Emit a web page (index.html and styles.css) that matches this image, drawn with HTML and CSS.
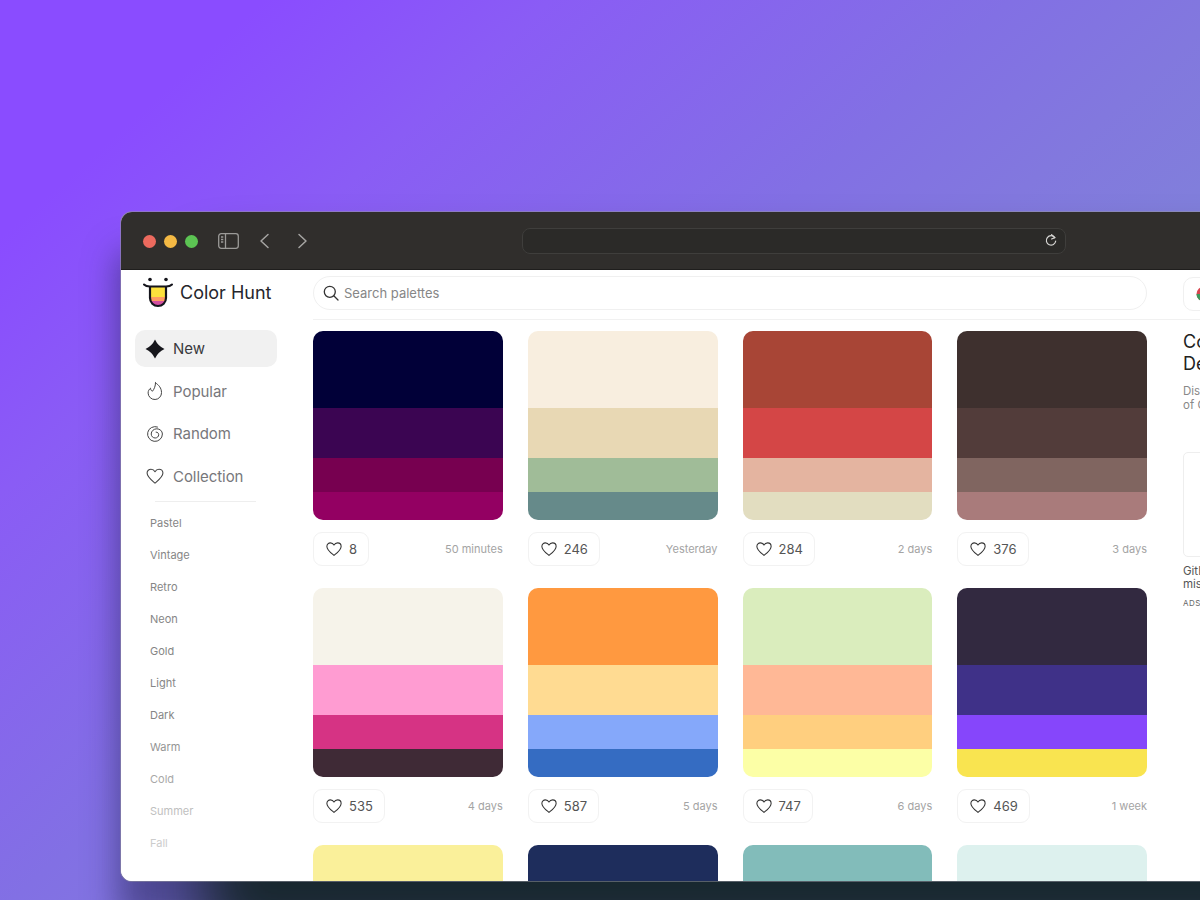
FILE: index.html
```html
<!DOCTYPE html>
<html lang="en">
<head>
<meta charset="utf-8">
<title>Color Hunt</title>
<link rel="stylesheet" href="styles.css">
</head>
<body>
<div class="stage">
  <div class="window">
    <div class="titlebar">
      <div class="lights"><span class="light red"></span><span class="light yellow"></span><span class="light green"></span></div>
      <svg class="tb-icon side" width="21" height="16" viewBox="0 0 21 16" fill="none" stroke="#9b9a98" stroke-width="1.3"><rect x=".7" y=".7" width="19.6" height="14.6" rx="2.5"/><path d="M7.5 .7v14.6M3 4h2.3M3 6.5h2.3M3 9h2.3"/></svg>
      <svg class="tb-icon back" width="11" height="16" viewBox="0 0 11 16" fill="none" stroke="#a5a4a2" stroke-width="1.5" stroke-linecap="round" stroke-linejoin="round"><path d="M9 1.5 2 8l7 6.5"/></svg>
      <svg class="tb-icon fwd" width="11" height="16" viewBox="0 0 11 16" fill="none" stroke="#a5a4a2" stroke-width="1.5" stroke-linecap="round" stroke-linejoin="round"><path d="M2 1.5 9 8l-7 6.500"/></svg>
      <div class="address">
        <svg width="12" height="13" viewBox="0 0 12 13" fill="none" stroke="#d8d7d5" stroke-width="1.2" stroke-linecap="round" stroke-linejoin="round"><path d="M9.8 3.6A4.7 4.7 0 1 0 10.7 7"/><path d="M6.6 .6 9.9 3.6 6.6 5"/></svg>
      </div>
    </div>
    <div class="page">
      <aside class="sidebar">
        <div class="brand">
          <svg class="logo" width="30" height="32" viewBox="0 0 30 32">
            <defs><clipPath id="tongue"><path d="M7 9h16v12a8 8 0 0 1-16 0z"/></clipPath></defs>
            <g clip-path="url(#tongue)"><rect x="6" y="8" width="18" height="13" fill="#fde13c"/><rect x="6" y="20" width="18" height="4" fill="#ff9b63"/><rect x="6" y="24" width="18" height="6" fill="#d24fa0"/></g>
            <path d="M7 9v12a8 8 0 0 0 16 0V9" fill="none" stroke="#15151c" stroke-width="2.2"/>
            <path d="M1 7.5c1.5 1.6 3.5 2 6 2h16c2.500 0 4.500-.4 6-2" fill="none" stroke="#15151c" stroke-width="2" stroke-linecap="round"/>
            <circle cx="7" cy="2.500" r="1.800" fill="#15151c"/><circle cx="23" cy="2.500" r="1.800" fill="#15151c"/>
          </svg>
          <span class="brand-name">Color Hunt</span>
        </div>
        <nav class="nav">
          <a class="nav-item active">
            <svg width="20" height="20" viewBox="0 0 20 20"><path fill="#17171c" d="M10 .5Q13 7 19.500 10 13 13 10 19.500 7 13 .5 10 7 7 10 .5Z"/></svg>
            New</a>
          <a class="nav-item">
            <svg width="20" height="20" viewBox="0 0 20 20" fill="none" stroke="#444" stroke-width="1" stroke-linejoin="round" stroke-linecap="round"><path d="M10.500 1.800c3.200 2.200 6 5.200 6 9.700a6.700 6.700 0 0 1-13.400.6c0-2.200 1-3.800 2.400-4.900.1 1.500.8 2.600 2 3 1.800-2.300 3-5.200 3-8.400z"/></svg>
            Popular</a>
          <a class="nav-item">
            <svg width="20" height="20" viewBox="0 0 20 20" fill="none" stroke="#444" stroke-width="1" stroke-linecap="round"><path d="M12.500 3A7.400 7.400 0 1 0 17.400 10c0-3-2.600-5.200-5.600-5.200-3 0-5.600 2.300-5.600 5.200 0 2.300 1.800 4 4 4 2 0 3.500-1.500 3.500-3.300 0-1.500-1.100-2.600-2.600-2.600"/></svg>
            Random</a>
          <a class="nav-item">
            <svg width="20" height="20" viewBox="0 0 24 24" fill="none" stroke="#444" stroke-width="1.300" stroke-linejoin="round"><use href="#heart"/></svg>
            Collection</a>
        </nav>
        <div class="divider"></div>
        <ul class="tags">
          <li>Pastel</li><li>Vintage</li><li>Retro</li><li>Neon</li><li>Gold</li><li>Light</li><li>Dark</li><li class="fade1">Warm</li><li class="fade2">Cold</li><li class="fade3">Summer</li><li class="fade4">Fall</li>
        </ul>
      </aside>
      <main class="main">
        <header class="topbar">
          <div class="search">
            <svg width="16" height="16" viewBox="0 0 16 16" fill="none" stroke="#333" stroke-width="1.300" stroke-linecap="round"><circle cx="6.800" cy="6.800" r="5.500"/><path d="m11 11 4 4"/></svg>
            <span>Search palettes</span>
          </div>
          <div class="lang"><svg width="16" height="16" viewBox="0 0 16 16"><circle cx="8" cy="8" r="7.500" fill="#d8464f"/><path d="M.5 8a7.500 7.500 0 0 0 15 0z" fill="#3a9a5c"/></svg></div>
        </header>
        <div class="content">
          <section class="grid">
            <article class="card">
              <div class="palette"><i style="background:#010038"></i><i style="background:#3b0552"></i><i style="background:#770050"></i><i style="background:#930062"></i></div>
              <div class="meta"><button class="like"><svg width="18" height="18"><use href="#heart18"/></svg>8</button><time>50 minutes</time></div>
            </article>
            <article class="card">
              <div class="palette"><i style="background:#f8eedf"></i><i style="background:#e8d8b4"></i><i style="background:#a0bc98"></i><i style="background:#668a8a"></i></div>
              <div class="meta"><button class="like"><svg width="18" height="18"><use href="#heart18"/></svg>246</button><time>Yesterday</time></div>
            </article>
            <article class="card">
              <div class="palette"><i style="background:#a84536"></i><i style="background:#d44646"></i><i style="background:#e4b4a0"></i><i style="background:#e2ddc0"></i></div>
              <div class="meta"><button class="like"><svg width="18" height="18"><use href="#heart18"/></svg>284</button><time>2 days</time></div>
            </article>
            <article class="card">
              <div class="palette"><i style="background:#3e302e"></i><i style="background:#523c3a"></i><i style="background:#806560"></i><i style="background:#a97b7b"></i></div>
              <div class="meta"><button class="like"><svg width="18" height="18"><use href="#heart18"/></svg>376</button><time>3 days</time></div>
            </article>
            <article class="card">
              <div class="palette"><i style="background:#f6f3ea"></i><i style="background:#ff9cd2"></i><i style="background:#d63384"></i><i style="background:#3f2a36"></i></div>
              <div class="meta"><button class="like"><svg width="18" height="18"><use href="#heart18"/></svg>535</button><time>4 days</time></div>
            </article>
            <article class="card">
              <div class="palette"><i style="background:#ff9940"></i><i style="background:#ffdb92"></i><i style="background:#85a8fa"></i><i style="background:#356cc2"></i></div>
              <div class="meta"><button class="like"><svg width="18" height="18"><use href="#heart18"/></svg>587</button><time>5 days</time></div>
            </article>
            <article class="card">
              <div class="palette"><i style="background:#daedbd"></i><i style="background:#ffb896"></i><i style="background:#ffcf7f"></i><i style="background:#fcffa6"></i></div>
              <div class="meta"><button class="like"><svg width="18" height="18"><use href="#heart18"/></svg>747</button><time>6 days</time></div>
            </article>
            <article class="card">
              <div class="palette"><i style="background:#322940"></i><i style="background:#3f3188"></i><i style="background:#8646fb"></i><i style="background:#f9e450"></i></div>
              <div class="meta"><button class="like"><svg width="18" height="18"><use href="#heart18"/></svg>469</button><time>1 week</time></div>
            </article>
            <article class="card">
              <div class="palette"><i style="background:#faf09a"></i></div>
            </article>
            <article class="card">
              <div class="palette"><i style="background:#1e2d5c"></i></div>
            </article>
            <article class="card">
              <div class="palette"><i style="background:#82bcba"></i></div>
            </article>
            <article class="card">
              <div class="palette"><i style="background:#ddf1ee"></i></div>
            </article>
          </section>
          <aside class="promo">
            <h2>Color Palettes for Designers and Artists</h2>
            <p>Discover the newest hand-picked palettes of Color Hunt</p>
            <div class="ad-box"></div>
            <p class="ad-text">GitHub Actions: the missing manual</p>
            <p class="ad-label">ADS VIA CARBON</p>
          </aside>
        </div>
      </main>
    </div>
  </div>
</div>
<svg class="defs" width="0" height="0">
  <defs>
    <path id="heart" d="M12 20.500C8 17.200 2.500 13.200 2.500 8.500 2.500 5.700 4.700 3.800 7.200 3.800c2 0 3.700 1 4.800 3 1.100-2 2.800-3 4.800-3 2.500 0 4.700 1.900 4.700 4.700 0 4.700-5.500 8.700-9.500 12z"/>
    <symbol id="heart18" viewBox="0 0 24 24"><use href="#heart" fill="none" stroke="#333" stroke-width="1.400" stroke-linejoin="round"/></symbol>
  </defs>
</svg>
</body>
</html>
```
FILE: styles.css
```css
* { box-sizing: border-box; }
html, body { margin: 0; padding: 0; }
body { font-family: Inter, "Liberation Sans", sans-serif; }
.defs { position: absolute; }

.stage {
  width: 1200px;
  height: 900px;
  overflow: hidden;
  padding: 212px 0 0 121px;
  background: linear-gradient(138deg, #8a4cff 12%, #8a5cf5 25%, #8270e4 46%, #8278de 56%, #7f8ad6 80%);
}
.window {
  width: 1200px;
  height: 669px;
  border-radius: 11px 0 0 11px;
  overflow: hidden;
  box-shadow:
    0 0 0 1px rgba(150,150,160,.5),
    90px 60px 60px 6px rgba(22,38,42,.95),
    -4px 40px 32px rgba(40,40,90,.55);
  display: flex;
  flex-direction: column;
  background: #fff;
}

/* Browser chrome */
.titlebar {
  height: 58px;
  flex: none;
  background: #302e2c;
  border-bottom: 1px solid #1f1e1d;
  display: flex;
  align-items: center;
  padding: 0 0 0 22px;
}
.lights { display: flex; gap: 8px; margin-top: 2px; }
.light { width: 13px; height: 13px; border-radius: 50%; }
.red { background: #ec6a5e; }
.yellow { background: #f4b944; }
.green { background: #5cc453; }
.side { margin-left: 20px; }
.back { margin-left: 20px; }
.fwd { margin-left: 27px; }
.address {
  width: 544px;
  height: 26px;
  margin-left: 214px;
  background: #2b2a28;
  border: 1.500px solid #3f3e3c;
  border-radius: 8px;
  display: flex;
  align-items: center;
  justify-content: flex-end;
  padding-right: 8px;
}

/* Page */
.page { flex: 1; display: flex; min-height: 0; background: #fff; }
.sidebar { width: 192px; flex: none; padding-left: 14px; }
.brand { height: 60px; display: flex; align-items: flex-start; padding: 7px 0 0 8px; gap: 7px; }
.brand-name { font-size: 18px; font-weight: 400; color: #26262c; line-height: 30px; margin-top: 1px; }
.nav { display: flex; flex-direction: column; gap: 5.500px; width: 142px; }
.nav-item {
  height: 37px;
  border-radius: 10px;
  padding-left: 10px;
  display: flex;
  align-items: center;
  gap: 8px;
  font-size: 15px;
  letter-spacing: -.05px;
  color: #77777b;
}
.nav-item.active { background: #f1f1f1; color: #3a3a3e; }
.divider { width: 101px; height: 1px; margin: 6px 0 0 20px; background: #eeeeee; }
.tags { list-style: none; margin: 5px 0 0; padding: 0 0 0 15px; }
.tags li { height: 32px; line-height: 32px; font-size: 11px; color: #868686; }
.tags .fade1 { color: #949494; }
.tags .fade2 { color: #a8a8a8; }
.tags .fade3 { color: #c0c0c0; }
.tags .fade4 { color: #cccccc; }

.main { flex: 1; min-width: 0; }
.topbar {
  height: 50px;
  padding-top: 6px;
  border-bottom: 1px solid #f1f1f1;
  display: flex;
  align-items: flex-start;
  gap: 36px;
}
.search {
  width: 834px;
  height: 34px;
  border: 1px solid #f0f0f0;
  border-radius: 17px;
  display: flex;
  align-items: center;
  gap: 5px;
  padding-left: 9px;
  font-size: 13px;
  color: #868686;
}
.lang {
  width: 60px;
  height: 34px;
  margin-top: 1px;
  border: 1px solid #f0f0f0;
  border-radius: 10px;
  display: flex;
  align-items: center;
  padding-left: 12px;
}

.content { display: flex; gap: 36px; padding-top: 11px; align-items: flex-start; }
.grid {
  width: 834px;
  flex: none;
  display: grid;
  grid-template-columns: repeat(4, 189.75px);
  column-gap: 25px;
  row-gap: 22px;
}
.palette {
  height: 189px;
  border-radius: 10px;
  overflow: hidden;
  display: grid;
  grid-template-rows: 77px 50px 34px 28px;
}
.palette i { display: block; }
.palette i:only-child { grid-row: 1 / -1; }
.meta { margin-top: 12px; height: 34px; display: flex; align-items: center; justify-content: space-between; }
.like {
  height: 34px;
  border: 1px solid #f2f2f2;
  border-radius: 9px;
  background: #fff;
  display: flex;
  align-items: center;
  gap: 6px;
  padding: 0 11px;
  font: 13px Inter, "Liberation Sans", sans-serif;
  color: #555;
}
time { font-size: 11px; color: #a4a4a4; }

.promo { width: 300px; flex: none; }
.promo h2 { margin: 0; width: 190px; font-size: 18px; line-height: 22px; font-weight: 400; color: #222; }
.promo p { margin: 9px 0 0; width: 230px; font-size: 11.500px; line-height: 14px; color: #888; }
.ad-box { width: 130px; height: 105px; margin-top: 40px; border: 1px solid #eeeeee; border-radius: 5px; }
.promo .ad-text { margin-top: 8px; width: 130px; line-height: 13px; color: #555; }
.promo .ad-label { margin-top: 7px; font-size: 8px; line-height: 10px; letter-spacing: .5px; color: #666; }
```
